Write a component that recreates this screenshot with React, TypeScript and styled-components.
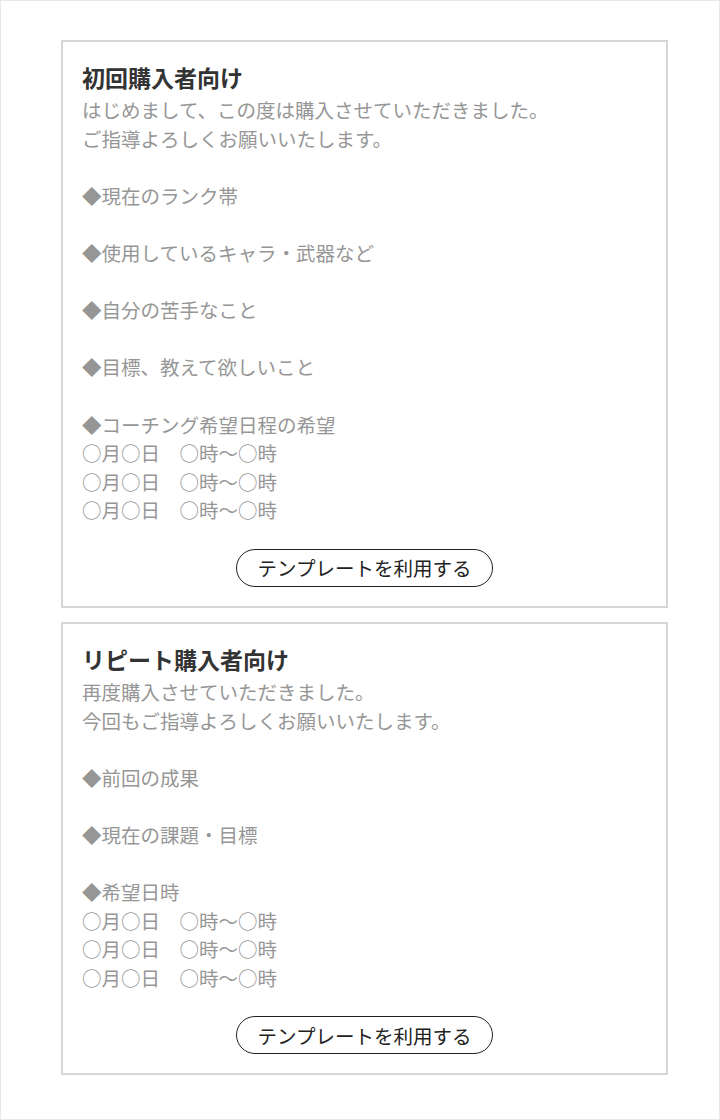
import React from "react";
import styled, { createGlobalStyle } from "styled-components";

const GlobalStyle = createGlobalStyle`
  body {
    margin: 0;
    background: #fff;
    font-family: "Noto Sans CJK JP", "Noto Sans", sans-serif;
  }
`;

const Page = styled.div`
  box-sizing: border-box;
  width: 720px;
  min-height: 1120px;
  border: 1px solid #e8e8e8;
  padding: 39px 51px 0 60px;
  display: flex;
  flex-direction: column;
  gap: 14px;
`;

const TemplateCard = styled.section`
  border: 2px solid #d6d6d6;
  padding: 19px 19px 19px;
  display: flex;
  flex-direction: column;
`;

const Title = styled.h2`
  margin: 0 0 3px;
  font-size: 23px;
  line-height: 32px;
  font-weight: 700;
  color: #333;
`;

const Body = styled.p`
  margin: 0;
  font-size: 19.5px;
  line-height: 28.6px;
  color: #969696;
  white-space: pre-line;
`;

const UseButton = styled.button`
  align-self: center;
  box-sizing: border-box;
  margin-top: 24px;
  height: 38px;
  padding: 0 21px;
  border: 1.5px solid #222;
  border-radius: 19px;
  background: #fff;
  font-family: inherit;
  font-size: 19.5px;
  color: #222;
  cursor: pointer;
`;

type Template = { title: string; body: string };

const templates: Template[] = [
  {
    title: "初回購入者向け",
    body: `はじめまして、この度は購入させていただきました。
ご指導よろしくお願いいたします。

◆現在のランク帯

◆使用しているキャラ・武器など

◆自分の苦手なこと

◆目標、教えて欲しいこと

◆コーチング希望日程の希望
○月○日　○時〜○時
○月○日　○時〜○時
○月○日　○時〜○時`,
  },
  {
    title: "リピート購入者向け",
    body: `再度購入させていただきました。
今回もご指導よろしくお願いいたします。

◆前回の成果

◆現在の課題・目標

◆希望日時
○月○日　○時〜○時
○月○日　○時〜○時
○月○日　○時〜○時`,
  },
];

const App: React.FC = () => (
  <>
    <GlobalStyle />
    <Page>
      {templates.map((t) => (
        <TemplateCard key={t.title}>
          <Title>{t.title}</Title>
          <Body>{t.body}</Body>
          <UseButton type="button">テンプレートを利用する</UseButton>
        </TemplateCard>
      ))}
    </Page>
  </>
);

export default App;
